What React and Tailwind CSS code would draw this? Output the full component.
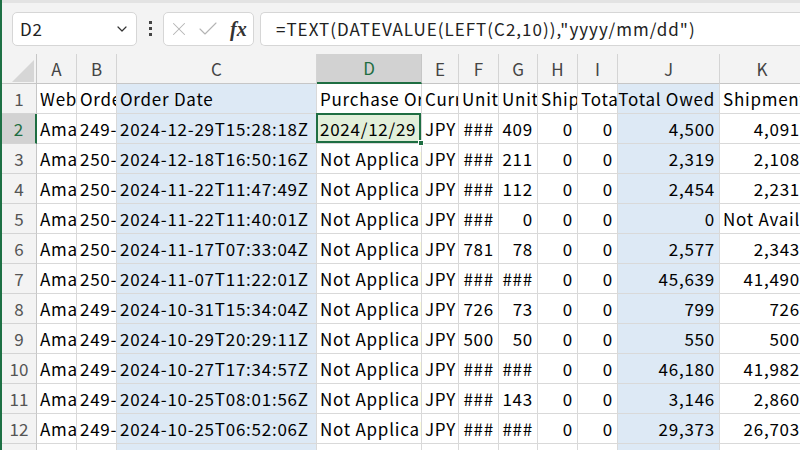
import React from "react";
import { ChevronDown, X, Check } from "lucide-react";

const font = { fontFamily: '"Noto Sans CJK JP", "Noto Sans", sans-serif' };

// column letter, width class, highlight
const columns = [
  { key: "A", w: "w-[40px]" },
  { key: "B", w: "w-[40px]" },
  { key: "C", w: "w-[200px]", blue: true },
  { key: "D", w: "w-[105px]", selected: true },
  { key: "E", w: "w-[37px]" },
  { key: "F", w: "w-[40px]" },
  { key: "G", w: "w-[39px]" },
  { key: "H", w: "w-[40px]" },
  { key: "I", w: "w-[40px]" },
  { key: "J", w: "w-[102px]", blue: true },
  { key: "K", w: "w-[85px]" },
];

const header = [
  "Website",
  "Order ID",
  "Order Date",
  "Purchase Order Number",
  "Currency",
  "Unit Price",
  "Unit Price Tax",
  "Shipping Charge",
  "Total Discounts",
  "Total Owed",
  "Shipment Item Subtotal",
];

const rows = [
  ["Amazon.co.jp", "249-", "2024-12-29T15:28:18Z", "2024/12/29", "JPY", "###", "409", "0", "0", "4,500", "4,091"],
  ["Amazon.co.jp", "250-", "2024-12-18T16:50:16Z", "Not Applicable", "JPY", "###", "211", "0", "0", "2,319", "2,108"],
  ["Amazon.co.jp", "250-", "2024-11-22T11:47:49Z", "Not Applicable", "JPY", "###", "112", "0", "0", "2,454", "2,231"],
  ["Amazon.co.jp", "250-", "2024-11-22T11:40:01Z", "Not Applicable", "JPY", "###", "0", "0", "0", "0", "Not Available"],
  ["Amazon.co.jp", "250-", "2024-11-17T07:33:04Z", "Not Applicable", "JPY", "781", "78", "0", "0", "2,577", "2,343"],
  ["Amazon.co.jp", "250-", "2024-11-07T11:22:01Z", "Not Applicable", "JPY", "###", "###", "0", "0", "45,639", "41,490"],
  ["Amazon.co.jp", "249-", "2024-10-31T15:34:04Z", "Not Applicable", "JPY", "726", "73", "0", "0", "799", "726"],
  ["Amazon.co.jp", "249-", "2024-10-29T20:29:11Z", "Not Applicable", "JPY", "500", "50", "0", "0", "550", "500"],
  ["Amazon.co.jp", "249-", "2024-10-27T17:34:57Z", "Not Applicable", "JPY", "###", "###", "0", "0", "46,180", "41,982"],
  ["Amazon.co.jp", "249-", "2024-10-25T08:01:56Z", "Not Applicable", "JPY", "###", "143", "0", "0", "3,146", "2,860"],
  ["Amazon.co.jp", "249-", "2024-10-25T06:52:06Z", "Not Applicable", "JPY", "###", "###", "0", "0", "29,373", "26,703"],
];

const isNumber = (v) => /^[0-9,]+$/.test(v) || v === "###";

const Cell = ({ col, value, align, rowSelected }) => {
  const selected = col.selected && rowSelected;
  let bg = "bg-white";
  if (col.blue) bg = "bg-[#dde9f5]";
  if (selected) bg = "bg-[#e2efda]";
  return (
    <div
      className={`relative shrink-0 h-[30px] ${col.w} ${bg} border-r border-b border-[#d9d9d9] whitespace-nowrap flex items-center text-[17px] tracking-[0.75px] text-black ${
        align === "R" ? "justify-end pr-[4px]" : "justify-start pl-[3px]"
      } ${selected ? "overflow-visible z-10" : "overflow-hidden"}`}
    >
      {selected ? <span className="overflow-hidden">{value}</span> : value}
      {selected && (
        <>
          <div className="absolute -left-px -top-px right-0 bottom-0 border-2 border-[#1e6e42] pointer-events-none" />
          <div className="absolute -right-[3px] -bottom-[3px] w-[6px] h-[6px] bg-[#1e6e42] border border-white" />
        </>
      )}
    </div>
  );
};

const RowHeader = ({ n, selected }) => (
  <div
    className={`shrink-0 w-[35px] h-[30px] flex items-center justify-center text-[17px] border-b border-[#d4d4d4] ${
      selected
        ? "bg-[#d2d2d2] text-[#1e6e42] border-r-2 border-r-[#1e6e42]"
        : "bg-[#f3f3f3] text-[#555] border-r border-r-[#c6c6c6]"
    }`}
  >
    {n}
  </div>
);

const App = () => {
  return (
    <div className="w-[800px] h-[450px] overflow-hidden bg-[#f3f3f3] border-l-2 border-[#1e7145]" style={font}>
      {/* formula bar */}
      <div className="h-[54px] flex items-center pl-[10px] border-t-[3px] border-[#e3e3e3]">
        <div className="w-[125px] h-[34px] bg-white border border-[#d6d6d6] rounded-[5px] flex items-center justify-between pl-[7px] pr-[6px] text-[17px] tracking-[0.75px] text-[#222]">
          <span>D2</span>
          <ChevronDown size={16} strokeWidth={1.8} className="text-[#333]" />
        </div>
        <div className="w-[26px] flex flex-col items-center gap-[3px]">
          <span className="w-[3px] h-[3px] bg-[#444]" />
          <span className="w-[3px] h-[3px] bg-[#444]" />
          <span className="w-[3px] h-[3px] bg-[#444]" />
        </div>
        <div className="w-[91px] h-[34px] bg-white border border-[#d6d6d6] rounded-[5px] flex items-center pl-[4px] pr-[4px] gap-[6px]">
          <X size={22} strokeWidth={1.1} className="text-[#b4b4b4]" />
          <Check size={24} strokeWidth={1.1} className="text-[#b4b4b4]" />
          <span
            className="italic font-bold text-[20px] text-[#333] ml-[4px]"
            style={{ fontFamily: '"Liberation Serif", serif' }}
          >
            fx
          </span>
        </div>
        <div className="ml-[6px] flex-1 h-[34px] bg-white border border-[#d6d6d6] rounded-l-[5px] border-r-0 flex items-center pl-[15px] text-[17px] tracking-[1px] text-[#222] whitespace-nowrap overflow-hidden">
          =TEXT(DATEVALUE(LEFT(C2,10)),"yyyy/mm/dd")
        </div>
      </div>

      {/* column headers */}
      <div className="flex h-[30px]">
        <div className="relative shrink-0 w-[35px] h-[30px] bg-[#f3f3f3] border-r border-b border-[#c6c6c6]">
          <svg className="absolute left-[10px] top-[6px]" width="22" height="22" viewBox="0 0 22 22">
            <polygon points="22,0 22,22 0,22" fill="#d6d6d6" />
          </svg>
        </div>
        {columns.map((c) => (
          <div
            key={c.key}
            className={`shrink-0 h-[30px] ${c.w} flex items-center justify-center text-[17px] ${
              c.selected
                ? "bg-[#d2d2d2] text-[#1e6e42] border-r border-r-[#c6c6c6] border-b-2 border-b-[#1e6e42]"
                : "bg-[#f3f3f3] text-[#444] border-r border-b border-[#d4d4d4] border-b-[#c6c6c6]"
            }`}
          >
            {c.key}
          </div>
        ))}
      </div>

      {/* header row */}
      <div className="flex">
        <RowHeader n={1} />
        {columns.map((c, i) => (
          <Cell key={c.key} col={c} value={header[i]} align={i === 9 ? "R" : "L"} />
        ))}
      </div>

      {rows.map((r, ri) => (
        <div className="flex" key={ri}>
          <RowHeader n={ri + 2} selected={ri === 0} />
          {columns.map((c, i) => (
            <Cell
              key={c.key}
              col={c}
              value={r[i]}
              align={i >= 5 && isNumber(r[i]) ? "R" : "L"}
              rowSelected={ri === 0}
            />
          ))}
        </div>
      ))}

      <div className="flex">
        <RowHeader n={13} />
        {columns.map((c) => (
          <Cell key={c.key} col={c} value="" align="L" />
        ))}
      </div>
    </div>
  );
};

export default App;
